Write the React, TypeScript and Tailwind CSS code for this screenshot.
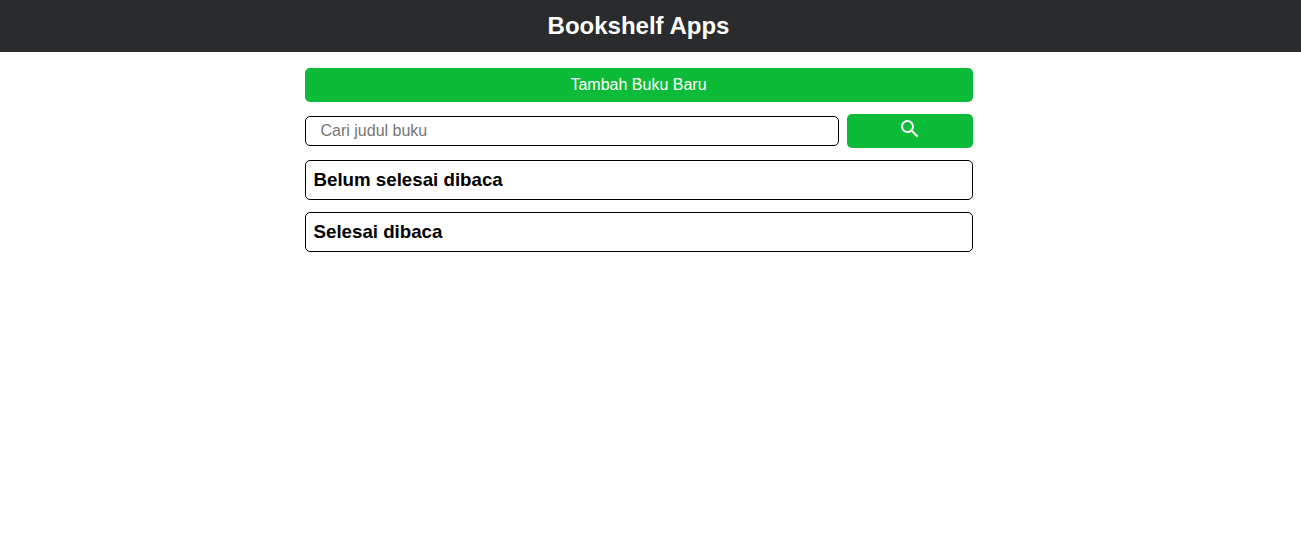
const shelves = ['Belum selesai dibaca', 'Selesai dibaca'];

export default function App() {
  return (
    <div className="min-h-screen bg-white font-['Liberation_Sans',Arial,sans-serif] text-black">
      <header className="flex h-[52px] w-full items-center justify-center bg-[#2a2b2d] pr-6">
        <h1 className="text-2xl font-bold text-white">Bookshelf Apps</h1>
      </header>
      <main className="ml-[304.5px] flex w-[668px] flex-col gap-3 pt-4">
        <button className="h-[34px] w-full rounded-[5px] bg-[#0cbb37] text-base leading-4 text-white">
          Tambah Buku Baru
        </button>
        <form className="flex items-center gap-2" onSubmit={(e) => e.preventDefault()}>
          <input
            type="text"
            placeholder="Cari judul buku"
            className="h-[30px] w-[534px] rounded-[5px] border border-black px-[15px] text-base placeholder:text-[#757575]"
          />
          <button
            type="submit"
            aria-label="Cari"
            className="flex h-[34px] w-[126px] justify-center rounded-[5px] bg-[#0cbb37] pt-[3px] text-white"
          >
            <svg viewBox="0 0 24 24" className="size-6 fill-current">
              <path d="M15.5 14h-.79l-.28-.27A6.471 6.471 0 0 0 16 9.5 6.5 6.5 0 1 0 9.5 16c1.61 0 3.09-.59 4.23-1.57l.27.28v.79l5 4.99L20.49 19l-4.99-5zm-6 0C7.01 14 5 11.99 5 9.5S7.01 5 9.5 5 14 7.01 14 9.5 11.99 14 9.5 14z" />
            </svg>
          </button>
        </form>
        {shelves.map((title) => (
          <section key={title} className="flex h-10 items-center rounded-[5px] border border-black px-2">
            <h2 className="text-[18.72px] font-bold">{title}</h2>
          </section>
        ))}
      </main>
    </div>
  );
}
